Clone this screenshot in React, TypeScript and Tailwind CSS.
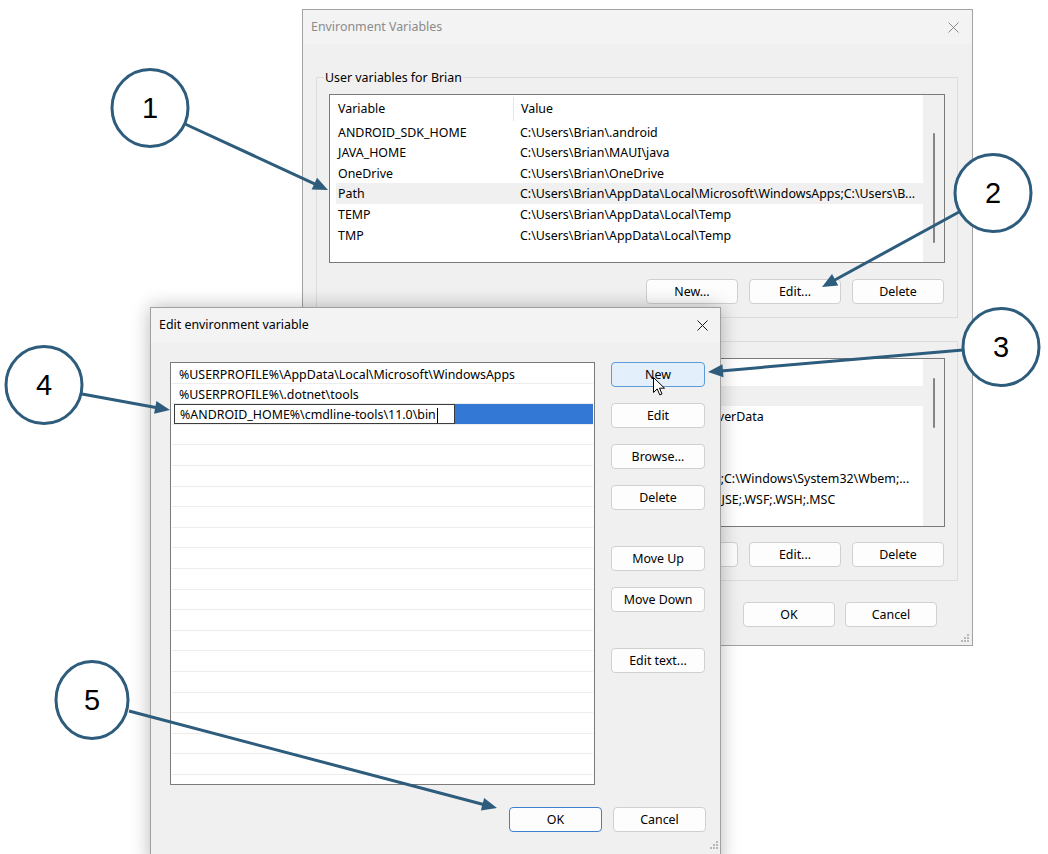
import React from "react";

const LINE = "#2d5c7c";

type Variant = "default" | "hover" | "focus";

const userVars: [string, string][] = [
  ["ANDROID_SDK_HOME", "C:\\Users\\Brian\\.android"],
  ["JAVA_HOME", "C:\\Users\\Brian\\MAUI\\java"],
  ["OneDrive", "C:\\Users\\Brian\\OneDrive"],
  ["Path", "C:\\Users\\Brian\\AppData\\Local\\Microsoft\\WindowsApps;C:\\Users\\B..."],
  ["TEMP", "C:\\Users\\Brian\\AppData\\Local\\Temp"],
  ["TMP", "C:\\Users\\Brian\\AppData\\Local\\Temp"],
];

const systemVars: [string, string][] = [
  ["ComSpec", "C:\\Windows\\system32\\cmd.exe"],
  ["DriverData", "C:\\Windows\\System32\\Drivers\\DriverData"],
  ["NUMBER_OF_PROCESSORS", "8"],
  ["OS", "Windows_NT"],
  ["Path", "C:\\Windows\\system32;C:\\Windows;C:\\Windows\\System32\\Wbem;..."],
  ["PATHEXT", ".COM;.EXE;.BAT;.CMD;.VBS;.VBE;.JS;.JSE;.WSF;.WSH;.MSC"],
];

function Btn({ label, w, variant = "default", children }: { label: string; w: string; variant?: Variant; children?: React.ReactNode }) {
  const look =
    variant === "hover"
      ? "border-[#5b9bd9] bg-[#e3effa]"
      : variant === "focus"
      ? "border-[#3f7fcf] bg-[#fdfdfd]"
      : "border-[#d0d0d0] bg-[#fdfdfd]";
  return (
    <div className={`relative ${w} h-[25px] shrink-0 flex items-center justify-center pt-[2px] rounded-[4px] border ${look} text-[12.4px] text-black`}>
      {label}
      {children}
    </div>
  );
}

function CloseX({ color }: { color: string }) {
  return (
    <svg width="11" height="11" viewBox="0 0 11 11">
      <path d="M0.5 0.5 L10.5 10.5 M10.5 0.5 L0.5 10.5" stroke={color} strokeWidth="1" />
    </svg>
  );
}

function Grip() {
  return (
    <svg width="10" height="10" viewBox="0 0 10 10">
      <rect x="8" y="2" width="2" height="2" fill="#b8b8b8" />
      <rect x="5" y="5" width="2" height="2" fill="#b8b8b8" />
      <rect x="8" y="5" width="2" height="2" fill="#b8b8b8" />
      <rect x="2" y="8" width="2" height="2" fill="#b8b8b8" />
      <rect x="5" y="8" width="2" height="2" fill="#b8b8b8" />
      <rect x="8" y="8" width="2" height="2" fill="#b8b8b8" />
    </svg>
  );
}

function VarList({ rows, selected, thumb }: { rows: [string, string][]; selected: number; thumb: string }) {
  return (
    <div className="w-[616px] h-[169px] border border-[#7a7a7a] bg-white flex">
      <div className="flex-1 min-w-0 pl-[6px] flex flex-col overflow-hidden">
        <div className="h-[26.7px] shrink-0 flex items-center pt-[2px]">
          <div className="w-[177px] pl-[2px]">Variable</div>
          <div className="w-px h-[24px] bg-[#e5e5e5]" />
          <div className="pl-[7px]">Value</div>
        </div>
        {rows.map(([k, v], i) => (
          <div
            key={k}
            className={`h-[20.6px] shrink-0 flex items-center pt-[2px] whitespace-nowrap ${i === selected ? "bg-[#f0f0f0]" : ""}`}
          >
            <div className="w-[184px] pl-[2px] shrink-0">{k}</div>
            <div className="overflow-hidden">{v}</div>
          </div>
        ))}
      </div>
      <div className="w-[21px] shrink-0 bg-[#f0f0f0] flex justify-center">
        <div className={`w-[2px] bg-[#858585] rounded-full ${thumb}`} />
      </div>
    </div>
  );
}

function GroupBox({ title, children }: { title: string; children: React.ReactNode }) {
  return (
    <div className="border border-[#dcdcdc] pl-[12px] pr-[13px] pb-[13px]">
      <div className="-mt-[9px] -ml-[5px] w-fit px-[1px] h-[17px] leading-[17px] bg-[#f0f0f0]">{title}</div>
      {children}
    </div>
  );
}

function EnvWindow() {
  return (
    <div className="absolute left-[302px] top-[9px] w-[671px] h-[637px] border border-[#a2a2a2] bg-[#f0f0f0] flex flex-col">
      <div className="h-[34px] shrink-0 bg-[#f3f3f3] flex items-center justify-between pl-[8px] pr-[13px] text-[#8b8b8b]">
        <span>Environment Variables</span>
        <CloseX color="#8a8a8a" />
      </div>
      <div className="pl-[13px] pr-[14px] pt-[33px] flex flex-col">
        <GroupBox title="User variables for Brian">
          <div className="mt-[8px]">
            <VarList rows={userVars} selected={3} thumb="mt-[38px] h-[110px]" />
          </div>
          <div className="mt-[16px] flex justify-end gap-[11px]">
            <Btn label="New..." w="w-[92px]" />
            <Btn label="Edit..." w="w-[92px]" />
            <Btn label="Delete" w="w-[92px]" />
          </div>
        </GroupBox>
        <div className="h-[23px]" />
        <GroupBox title="System variables">
          <div className="mt-[8px]">
            <VarList rows={systemVars} selected={0} thumb="mt-[19px] h-[50px]" />
          </div>
          <div className="mt-[15px] flex justify-end gap-[11px]">
            <Btn label="New..." w="w-[92px]" />
            <Btn label="Edit..." w="w-[92px]" />
            <Btn label="Delete" w="w-[92px]" />
          </div>
        </GroupBox>
        <div className="mt-[21px] pr-[21px] flex justify-end gap-[10px]">
          <Btn label="OK" w="w-[92px]" />
          <Btn label="Cancel" w="w-[92px]" />
        </div>
      </div>
      <div className="absolute right-[3px] bottom-[3px]">
        <Grip />
      </div>
    </div>
  );
}

const pathEntries = [
  "%USERPROFILE%\\AppData\\Local\\Microsoft\\WindowsApps",
  "%USERPROFILE%\\.dotnet\\tools",
];

function EditDialog() {
  const blanks = Array.from({ length: 18 }, (_, i) => i);
  return (
    <div className="absolute left-[150px] top-[307px] w-[571px] h-[560px] border border-[#a0a0a0] bg-[#f0f0f0] shadow-[0_0_18px_rgba(0,0,0,0.28)] flex flex-col">
      <div className="h-[35px] shrink-0 bg-[#f3f3f3] flex items-center justify-between pl-[8px] pr-[12px] text-black">
        <span>Edit environment variable</span>
        <CloseX color="#1a1a1a" />
      </div>
      <div className="pl-[19px] pr-[14px] pt-[19px] flex gap-[16px]">
        <div className="w-[425px] h-[423px] border border-[#7a7a7a] bg-white overflow-hidden flex flex-col">
          {pathEntries.map((p) => (
            <div key={p} className="h-[20.6px] shrink-0 mx-[1px] border-b border-[#ececec] flex items-center pt-[4px] pl-[7px] whitespace-nowrap">
              {p}
            </div>
          ))}
          <div className="h-[20.6px] shrink-0 mx-[1px] border-b border-[#ececec] flex items-stretch pl-[2px]">
            <div className="w-[281px] border border-[#3c3c3c] bg-white flex items-center pt-[3px] pl-[5px] whitespace-nowrap">
              %ANDROID_HOME%\cmdline-tools\11.0\bin
              <span className="ml-[1px] w-px h-[15px] bg-black" />
            </div>
            <div className="flex-1 bg-[#3278d4]" />
          </div>
          {blanks.map((i) => (
            <div key={i} className="h-[20.6px] shrink-0 mx-[1px] border-b border-[#ececec]" />
          ))}
        </div>
        <div className="flex flex-col gap-[16px]">
          <Btn label="New" w="w-[94px]" variant="hover">
            <svg className="absolute left-[41px] top-[14px]" width="13" height="20" viewBox="0 0 13 20">
              <path d="M0.5 0.5 L0.5 15.5 L4.2 11.9 L6.8 17.9 L9 17 L6.5 11.2 L11.5 11.2 Z" fill="#fff" stroke="#000" strokeWidth="1" strokeLinejoin="round" />
            </svg>
          </Btn>
          <Btn label="Edit" w="w-[94px]" />
          <Btn label="Browse..." w="w-[94px]" />
          <Btn label="Delete" w="w-[94px]" />
          <div className="h-[4px]" />
          <Btn label="Move Up" w="w-[94px]" />
          <Btn label="Move Down" w="w-[94px]" />
          <div className="h-[4px]" />
          <Btn label="Edit text..." w="w-[94px]" />
        </div>
      </div>
      <div className="mt-[22px] pr-[14px] flex justify-end gap-[11px]">
        <Btn label="OK" w="w-[93px]" variant="focus" />
        <Btn label="Cancel" w="w-[93px]" />
      </div>
      <div className="absolute right-[2px] top-[531px]">
        <Grip />
      </div>
    </div>
  );
}

function Arrow({ x1, y1, x2, y2 }: { x1: number; y1: number; x2: number; y2: number }) {
  const dx = x2 - x1;
  const dy = y2 - y1;
  const len = Math.hypot(dx, dy);
  const ux = dx / len;
  const uy = dy / len;
  const hl = 15;
  const hw = 6.5;
  const bx = x2 - ux * hl;
  const by = y2 - uy * hl;
  const pts = `${x2},${y2} ${bx - uy * hw},${by + ux * hw} ${bx + uy * hw},${by - ux * hw}`;
  return (
    <g>
      <line x1={x1} y1={y1} x2={bx + ux * 2} y2={by + uy * 2} stroke={LINE} strokeWidth={3} />
      <polygon points={pts} fill={LINE} />
    </g>
  );
}

function Callout({ cx, cy, n, rx = 38 }: { cx: number; cy: number; n: string; rx?: number }) {
  return (
    <g>
      <ellipse cx={cx} cy={cy} rx={rx} ry={38.5} fill="#fff" stroke={LINE} strokeWidth={3} />
      <text
        x={cx}
        y={cy + 10}
        textAnchor="middle"
        fontSize="29"
        fontFamily="'Liberation Sans', Arial, sans-serif"
        fill="#000"
      >
        {n}
      </text>
    </g>
  );
}

export default function App() {
  return (
    <div className="relative w-[1048px] h-[854px] bg-white overflow-hidden text-[12.4px] text-black font-['Noto_Sans',sans-serif]">
      <EnvWindow />
      <EditDialog />
      <svg className="absolute left-0 top-0 pointer-events-none" width="1048" height="854" viewBox="0 0 1048 854">
        <Arrow x1={185} y1={124} x2={328} y2={190} />
        <Arrow x1={959} y1={212} x2={822} y2={287} />
        <Arrow x1={963} y1={350} x2={708} y2={372} />
        <Arrow x1={82} y1={394} x2={170} y2={410} />
        <Arrow x1={129} y1={711} x2={497} y2={808} />
        <Callout cx={150} cy={108} n="1" />
        <Callout cx={993} cy={193} n="2" />
        <Callout cx={1001} cy={347} n="3" />
        <Callout cx={44} cy={385} n="4" />
        <Callout cx={92} cy={700} n="5" rx={36} />
      </svg>
    </div>
  );
}
